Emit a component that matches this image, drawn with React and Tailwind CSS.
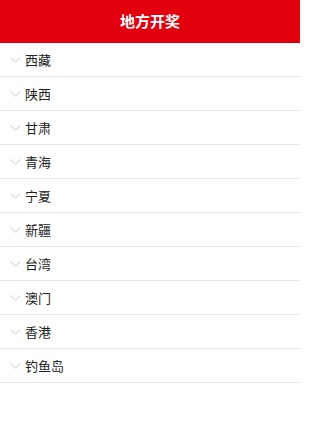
import React from 'react';

const regions = ['西藏', '陕西', '甘肃', '青海', '宁夏', '新疆', '台湾', '澳门', '香港', '钓鱼岛'];

function Chevron() {
  return (
    <svg width="11" height="6" viewBox="0 0 11 6" className="shrink-0">
      <path d="M0.5 0.5 L5.5 5 L10.5 0.5" fill="none" stroke="#c8c8c8" strokeWidth="1" />
    </svg>
  );
}

export default function App() {
  return (
    <div
      className="w-[300px] min-h-[448px] bg-white"
      style={{ fontFamily: '"Noto Sans CJK SC", "Noto Sans", sans-serif' }}
    >
      {/* Header */}
      <div className="h-[43px] bg-[#e2000f] flex items-center justify-center">
        <h1 className="text-white text-[15px] font-bold">地方开奖</h1>
      </div>

      {/* Region list */}
      <ul>
        {regions.map((name) => (
          <li
            key={name}
            className="h-[34px] border-b border-[#e6e6e6] flex items-center pl-[10px] gap-[4px]"
          >
            <Chevron />
            <span className="text-[13px] text-[#222]">{name}</span>
          </li>
        ))}
      </ul>
    </div>
  );
}
